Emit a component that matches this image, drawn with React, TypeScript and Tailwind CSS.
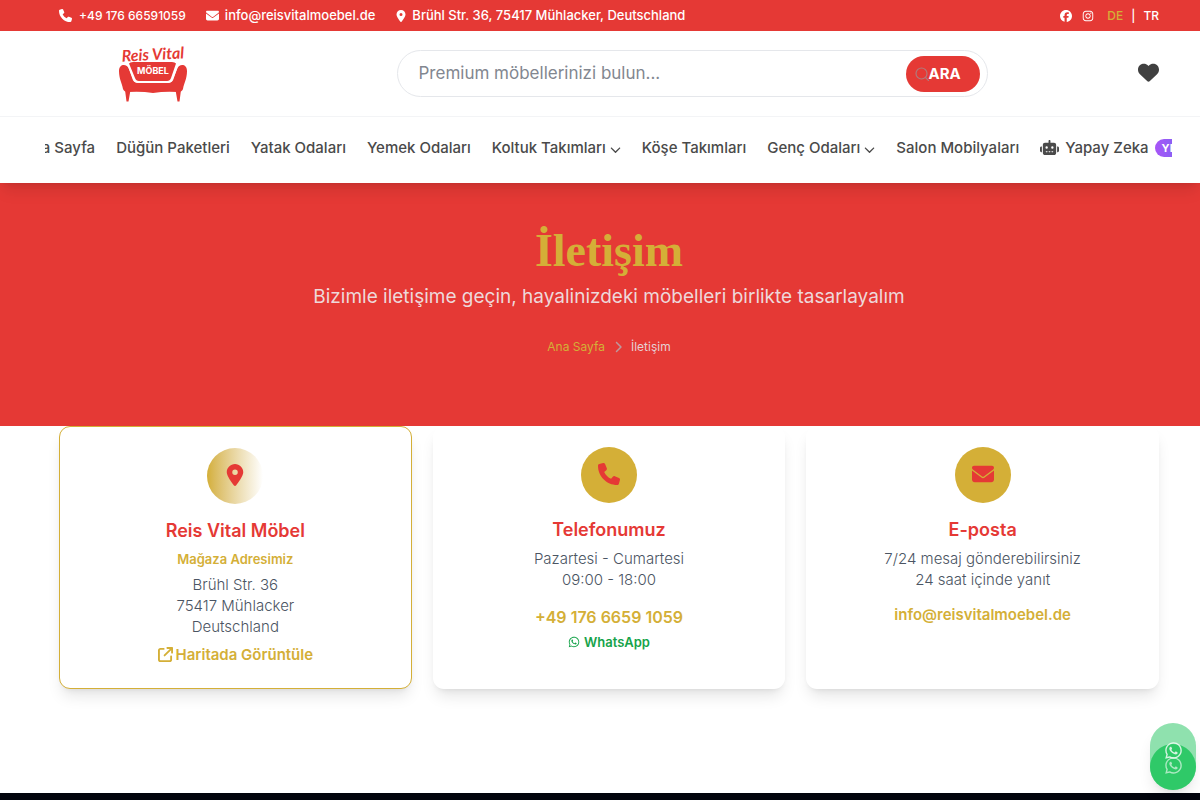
import type { ReactNode } from "react";
import {
  FaArrowUpRightFromSquare,
  FaChevronDown,
  FaChevronRight,
  FaEnvelope,
  FaFacebook,
  FaHeart,
  FaInstagram,
  FaLocationDot,
  FaPhone,
  FaRobot,
  FaWhatsapp,
} from "react-icons/fa6";

const navItems = [
  { label: "Ana Sayfa" },
  { label: "Düğün Paketleri" },
  { label: "Yatak Odaları" },
  { label: "Yemek Odaları" },
  { label: "Koltuk Takımları", menu: true },
  { label: "Köşe Takımları" },
  { label: "Genç Odaları", menu: true },
  { label: "Salon Mobilyaları" },
];

function Container({ className = "", children }: { className?: string; children: ReactNode }) {
  return (
    <div className="pl-[18px]">
      <div className={`mx-auto max-w-[1100px] ${className}`}>{children}</div>
    </div>
  );
}

function Logo() {
  return (
    <a href="#" aria-label="Reis Vital Möbel">
      <svg width="70" height="58" viewBox="0 0 70 58" className="overflow-visible">
        <g fill="#e53935">
          <text x="35" y="15" textAnchor="middle" fontFamily="Lato, sans-serif" fontStyle="italic" fontWeight="700" fontSize="16" transform="rotate(-3 35 12)">
            Reis Vital
          </text>
          <path d="M11 18.500Q12 17 15 17H54Q57 17 58 18.500L53 33Q52 36 49 36H21Q18 36 17 33Z" />
          <path d="M1 26C1 18.500 9 18.500 11 24L15 34Q16.500 38 20 38H50Q53.500 38 55 34L59 24C61 18.500 69 18.500 69 26C69 34 66 38 65 44Q64 47 60 47Q47 46 35 48Q23 46 10 47Q6 47 5 44C4 38 1 34 1 26Z" />
          <path d="M7 45H12.500L10.500 56.500H8.500Z M57.500 45H63L61.500 56.500H59.500Z" />
        </g>
        <path d="M10.500 20.500L15.500 34.500Q16.500 37 19.500 37H50.500Q53.500 37 54.500 34.500L59.500 20.500" fill="none" stroke="#fff" strokeWidth="1.500" />
        <text x="35" y="29" textAnchor="middle" fill="#fff" fontFamily="Inter, sans-serif" fontWeight="700" fontSize="9">
          MÖBEL
        </text>
      </svg>
    </a>
  );
}

function TopBar() {
  return (
    <div className="bg-[#e53935] text-[13px] font-medium text-white">
      <Container className="flex h-[31px] items-center justify-between">
        <div className="flex items-center gap-5">
          <a href="tel:+4917666591059" className="flex items-center gap-[7px] text-xs">
            <FaPhone size={13} />
            +49 176 66591059
          </a>
          <a href="mailto:info@reisvitalmoebel.de" className="flex items-center gap-[6px]">
            <FaEnvelope size={13} />
            info@reisvitalmoebel.de
          </a>
          <span className="flex items-center gap-[5px]">
            <FaLocationDot size={12} />
            Brühl Str. 36, 75417 Mühlacker, Deutschland
          </span>
        </div>
        <div className="flex items-center text-xs">
          <a href="#" aria-label="Facebook" className="mr-[10px]"><FaFacebook size={12} /></a>
          <a href="#" aria-label="Instagram" className="mr-[13px]"><FaInstagram size={12} /></a>
          <a href="#" className="text-[#d4af37]">DE</a>
          <span className="mx-2">|</span>
          <a href="#">TR</a>
        </div>
      </Container>
    </div>
  );
}

function SearchBar() {
  return (
    <form className="flex h-[47px] max-w-[591px] flex-1 items-center rounded-full border border-[#e5e7eb] pr-[7px] pl-[21px]">
      <input
        type="text"
        aria-label="Arama"
        placeholder="Premium möbellerinizi bulun..."
        className="min-w-0 flex-1 text-[17px] outline-none placeholder:text-[#828790]"
      />
      <button type="button" className="flex h-9 w-[74px] items-center rounded-full bg-[#e53935] pl-[9px] text-[15px] leading-5 font-bold text-white">
        <svg width="14" height="14" viewBox="0 0 14 14" fill="none" stroke="#b07a7c" strokeWidth="1.200" className="shrink-0">
          <circle cx="6.500" cy="6.500" r="5.500" />
          <path d="M10.500 10.500L14 14" />
        </svg>
        ARA
      </button>
    </form>
  );
}

function Header() {
  return (
    <header className="relative z-10 bg-white shadow-lg">
      <TopBar />
      <Container className="flex h-[85px] items-center justify-between">
        <div className="flex w-[187px] justify-center"><Logo /></div>
        <SearchBar />
        <button type="button" aria-label="Favoriler" className="pb-[3px] text-[#404040]">
          <FaHeart size={21} />
        </button>
      </Container>
      <div className="border-t border-gray-100 pr-7 pl-[45px]">
        <nav className="flex justify-center gap-[21px] overflow-hidden pt-5 pb-[25px] text-[15px] leading-[21px] font-medium whitespace-nowrap text-[#4a4a4a]">
          {navItems.map((item) => (
            <a key={item.label} href="#" className="flex shrink-0 items-center gap-1">
              {item.label}
              {item.menu && <FaChevronDown size={11} className="mt-[3px]" />}
            </a>
          ))}
          <a href="#" className="flex shrink-0 items-center gap-[6px]">
            <FaRobot size={19} />
            Yapay Zeka
            <span className="rounded-full bg-linear-to-r from-[#a855f7] to-[#6366f1] px-[7px] text-[11px] leading-[18px] font-bold text-white">
              YENİ
            </span>
          </a>
        </nav>
      </div>
    </header>
  );
}

function Hero() {
  return (
    <section className="bg-[#e53935] pt-[38px] pb-[70px] text-center">
      <Container>
        <h1 className="font-['Liberation_Serif',serif] text-[46px] leading-[60px] font-bold text-[#d4af37]">İletişim</h1>
        <p className="mt-1 text-[19px] leading-6 text-[#eed8da]">
          Bizimle iletişime geçin, hayalinizdeki möbelleri birlikte tasarlayalım
        </p>
        <div className="mt-[29px] flex items-center justify-center gap-[7px] text-xs leading-[18px]">
          <a href="#" className="text-[#d4af37]">Ana Sayfa</a>
          <FaChevronRight size={12} className="text-[#bd989d]" />
          <span className="text-[#e5d0d3]">İletişim</span>
        </div>
      </Container>
    </section>
  );
}

function Card({ icon, title, featured = false, children }: { icon: ReactNode; title: string; featured?: boolean; children: ReactNode }) {
  return (
    <article
      className={`flex flex-col items-center rounded-[11px] border bg-white px-5 text-center shadow-lg ${
        featured ? "border-[#d4af37] pt-[21px] pb-[23px]" : "border-transparent py-5"
      }`}
    >
      <div
        className={`flex size-14 items-center justify-center rounded-full pb-[3px] text-[#e53935] ${
          featured ? "bg-linear-to-r from-[#d4af37] to-white" : "bg-[#d4af37]"
        }`}
      >
        {icon}
      </div>
      <h3 className="mt-[14px] text-lg leading-[25px] font-semibold text-[#e53935]">{title}</h3>
      {children}
    </article>
  );
}

function ContactCards() {
  return (
    <section className="bg-white pb-[104px]">
      <Container className="grid grid-cols-3 gap-[21px] text-[15px] leading-[21px] text-[#4b5563]">
        <Card featured title="Reis Vital Möbel" icon={<FaLocationDot size={22} />}>
          <p className="mt-[7px] text-[13px] leading-[18px] font-semibold text-[#d4af37]">Mağaza Adresimiz</p>
          <p className="mt-[6px] font-light">
            Brühl Str. 36<br />75417 Mühlacker<br />Deutschland
          </p>
          <a href="#" className="mt-[7px] flex items-center gap-[3px] font-semibold text-[#d4af37]">
            <FaArrowUpRightFromSquare size={15} />
            Haritada Görüntüle
          </a>
        </Card>
        <Card title="Telefonumuz" icon={<FaPhone size={22} />}>
          <p className="mt-[6px] font-light">
            Pazartesi - Cumartesi<br />09:00 - 18:00
          </p>
          <a href="tel:+4917666591059" className="mt-[15px] text-base font-semibold text-[#d4af37]">+49 176 6659 1059</a>
          <a href="#" className="mt-1 flex items-center gap-1 text-[13px] leading-[18px] font-semibold text-[#16a34a]">
            <FaWhatsapp size={12} />
            WhatsApp
          </a>
        </Card>
        <Card title="E-posta" icon={<FaEnvelope size={22} />}>
          <p className="mt-[6px] font-light">
            7/24 mesaj gönderebilirsiniz<br />24 saat içinde yanıt
          </p>
          <a href="mailto:info@reisvitalmoebel.de" className="mt-[14px] font-semibold text-[#d4af37]">info@reisvitalmoebel.de</a>
        </Card>
      </Container>
    </section>
  );
}

function WhatsAppButton() {
  return (
    <a href="#" aria-label="WhatsApp" className="fixed right-1 bottom-[10px] z-20 flex h-[67px] w-[46px] items-end rounded-full bg-[#8fe1ae] shadow-lg">
      <span className="h-[46px] w-full rounded-full bg-[#2fc968]" />
      <span className="absolute inset-x-0 top-[18px] flex flex-col items-center text-white">
        <FaWhatsapp size={19} className="opacity-80" />
        <FaWhatsapp size={19} className="-mt-1 opacity-60" />
      </span>
    </a>
  );
}

export default function App() {
  return (
    <div className="flex min-h-screen flex-col bg-white font-['Inter',sans-serif]">
      <Header />
      <main>
        <Hero />
        <ContactCards />
      </main>
      <footer className="flex-1 bg-[#02040c]" />
      <WhatsAppButton />
    </div>
  );
}
